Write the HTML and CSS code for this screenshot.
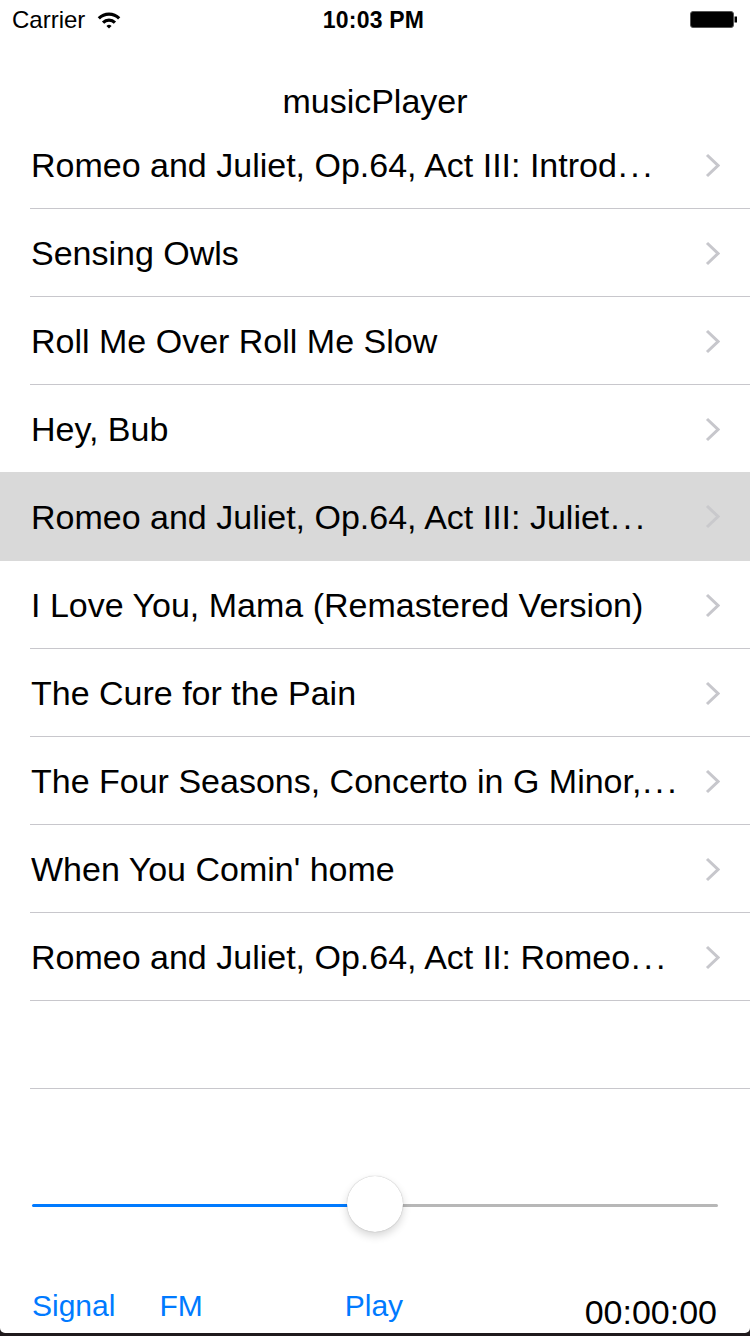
FILE: index.html
```html
<!DOCTYPE html>
<html>
<head>
<meta charset="utf-8">
<title>musicPlayer</title>
<link rel="stylesheet" href="styles.css">
</head>
<body>
<div class="screen">
  <div class="status">
    <div class="status-left">
      <span class="carrier">Carrier</span>
      <svg class="wifi" width="24" height="18" viewBox="0 0 24 18">
        <path d="M0.7 6.2 A16 16 0 0 1 23.3 6.2 L21.05 8.45 A12.8 12.8 0 0 0 2.95 8.45 Z" fill="#000"/>
        <path d="M4.93 10.43 A10 10 0 0 1 19.07 10.43 L16.81 12.69 A6.8 6.8 0 0 0 7.19 12.69 Z" fill="#000"/>
        <path d="M9.45 14.95 A3.6 3.6 0 0 1 14.55 14.95 L12 17.5 Z" fill="#000"/>
      </svg>
    </div>
    <div class="clock">10:03 PM</div>
    <div class="status-right">
      <svg class="battery" width="50" height="20" viewBox="0 0 50 20">
        <rect x="0.5" y="1.5" width="43" height="16" rx="2.5" fill="#000" stroke="#555" stroke-width="1"/>
        <rect x="44.5" y="6.5" width="2.5" height="6" fill="#000"/>
      </svg>
    </div>
  </div>
  <header class="nav">musicPlayer</header>
  <ul class="list">
    <li class="row"><span class="title">Romeo and Juliet, Op.64, Act III: Introd<span class="ell">...</span></span><svg class="chev" width="15" height="25" viewBox="0 0 15 25"><polyline points="2,2 13,12.5 2,23" fill="none" stroke="#c7c7cc" stroke-width="3"/></svg></li>
    <li class="row"><span class="title">Sensing Owls</span><svg class="chev" width="15" height="25" viewBox="0 0 15 25"><polyline points="2,2 13,12.5 2,23" fill="none" stroke="#c7c7cc" stroke-width="3"/></svg></li>
    <li class="row"><span class="title">Roll Me Over Roll Me Slow</span><svg class="chev" width="15" height="25" viewBox="0 0 15 25"><polyline points="2,2 13,12.5 2,23" fill="none" stroke="#c7c7cc" stroke-width="3"/></svg></li>
    <li class="row before-selected"><span class="title">Hey, Bub</span><svg class="chev" width="15" height="25" viewBox="0 0 15 25"><polyline points="2,2 13,12.5 2,23" fill="none" stroke="#c7c7cc" stroke-width="3"/></svg></li>
    <li class="row selected"><span class="title">Romeo and Juliet, Op.64, Act III: Juliet<span class="ell">...</span></span><svg class="chev" width="15" height="25" viewBox="0 0 15 25"><polyline points="2,2 13,12.5 2,23" fill="none" stroke="#c9c9cc" stroke-width="3"/></svg></li>
    <li class="row"><span class="title">I Love You, Mama (Remastered Version)</span><svg class="chev" width="15" height="25" viewBox="0 0 15 25"><polyline points="2,2 13,12.5 2,23" fill="none" stroke="#c7c7cc" stroke-width="3"/></svg></li>
    <li class="row"><span class="title">The Cure for the Pain</span><svg class="chev" width="15" height="25" viewBox="0 0 15 25"><polyline points="2,2 13,12.5 2,23" fill="none" stroke="#c7c7cc" stroke-width="3"/></svg></li>
    <li class="row"><span class="title">The Four Seasons, Concerto in G Minor,<span class="ell">...</span></span><svg class="chev" width="15" height="25" viewBox="0 0 15 25"><polyline points="2,2 13,12.5 2,23" fill="none" stroke="#c7c7cc" stroke-width="3"/></svg></li>
    <li class="row"><span class="title">When You Comin' home</span><svg class="chev" width="15" height="25" viewBox="0 0 15 25"><polyline points="2,2 13,12.5 2,23" fill="none" stroke="#c7c7cc" stroke-width="3"/></svg></li>
    <li class="row"><span class="title">Romeo and Juliet, Op.64, Act II: Romeo<span class="ell">...</span></span><svg class="chev" width="15" height="25" viewBox="0 0 15 25"><polyline points="2,2 13,12.5 2,23" fill="none" stroke="#c7c7cc" stroke-width="3"/></svg></li>
    <li class="row empty"></li>
  </ul>
  <div class="slider">
    <div class="track">
      <div class="fill" style="width: 343px"></div>
      <div class="rest"></div>
    </div>
    <div class="thumb"></div>
  </div>
  <div class="controls">
    <span class="btn signal">Signal</span>
    <span class="btn fm">FM</span>
    <span class="btn play">Play</span>
    <span class="time">00:00:00</span>
  </div>
</div>
</body>
</html>
```

FILE: styles.css
```css
html, body {
  margin: 0;
  padding: 0;
}
body {
  width: 750px;
  height: 1336px;
  background: #1f1a1c;
  font-family: "Liberation Sans", Arial, sans-serif;
  color: #000;
  overflow: hidden;
}
.screen {
  width: 750px;
  height: 1333px;
  background: #fff;
  border-radius: 0 0 5px 5px;
  overflow: hidden;
}
.status {
  height: 40px;
  display: flex;
  align-items: center;
  justify-content: space-between;
}
.status-left {
  display: flex;
  align-items: center;
  padding-left: 12px;
  width: 200px;
  box-sizing: border-box;
}
.carrier {
  font-size: 24px;
  line-height: 40px;
}
.wifi {
  display: block;
  margin-left: 12px;
  margin-top: 0;
}
.clock {
  font-size: 23px;
  font-weight: bold;
  line-height: 40px;
  letter-spacing: 0.2px;
  margin-right: 3px;
}
.status-right {
  width: 200px;
  display: flex;
  justify-content: flex-end;
  padding-right: 10px;
  box-sizing: border-box;
}
.battery {
  display: block;
}
.nav {
  height: 81px;
  box-sizing: border-box;
  padding-top: 42px;
  font-size: 34px;
  line-height: 38px;
  text-align: center;
}
.list {
  list-style: none;
  margin: 0;
  padding: 0;
}
.row {
  height: 88px;
  box-sizing: border-box;
  display: flex;
  align-items: center;
  padding-left: 31px;
  padding-right: 30px;
  position: relative;
}
.row::after {
  content: "";
  position: absolute;
  left: 30px;
  right: 0;
  bottom: 0;
  height: 1px;
  background: #c8c7cc;
}
.row.before-selected::after,
.row.selected::after {
  display: none;
}
.row.selected {
  background: #d9d9d9;
  height: 89px;
  margin-top: -1px;
}
.title {
  flex: 1;
  font-size: 34px;
  line-height: 40px;
  white-space: nowrap;
  overflow: hidden;
  text-overflow: ellipsis;
  padding-right: 20px;
}
.ell {
  letter-spacing: 3px;
  margin-left: 1px;
}
.chev {
  flex: none;
  display: block;
}
.slider {
  margin: 88px 32px 0 32px;
  height: 56px;
  position: relative;
  display: flex;
  align-items: center;
}
.track {
  width: 100%;
  height: 3px;
  display: flex;
}
.fill {
  background: #007aff;
  height: 3px;
  border-radius: 2px 0 0 2px;
}
.rest {
  flex: 1;
  background: #b7b7b7;
  height: 3px;
  border-radius: 0 2px 2px 0;
}
.thumb {
  position: absolute;
  left: 315px;
  top: -1px;
  width: 56px;
  height: 56px;
  border-radius: 50%;
  background: #fff;
  box-shadow: 0 0 1px rgba(0, 0, 0, 0.35), 0 4px 8px rgba(0, 0, 0, 0.16);
}
.controls {
  height: 100px;
  display: flex;
  align-items: flex-end;
  padding-left: 32px;
  padding-right: 33px;
}
.btn {
  color: #007aff;
  font-size: 30px;
  line-height: 30px;
  margin-bottom: 12px;
}
.fm {
  margin-left: 44px;
}
.play {
  margin-left: 142px;
}
.time {
  margin-left: auto;
  font-size: 34px;
  line-height: 34px;
  margin-bottom: 4px;
}
```
